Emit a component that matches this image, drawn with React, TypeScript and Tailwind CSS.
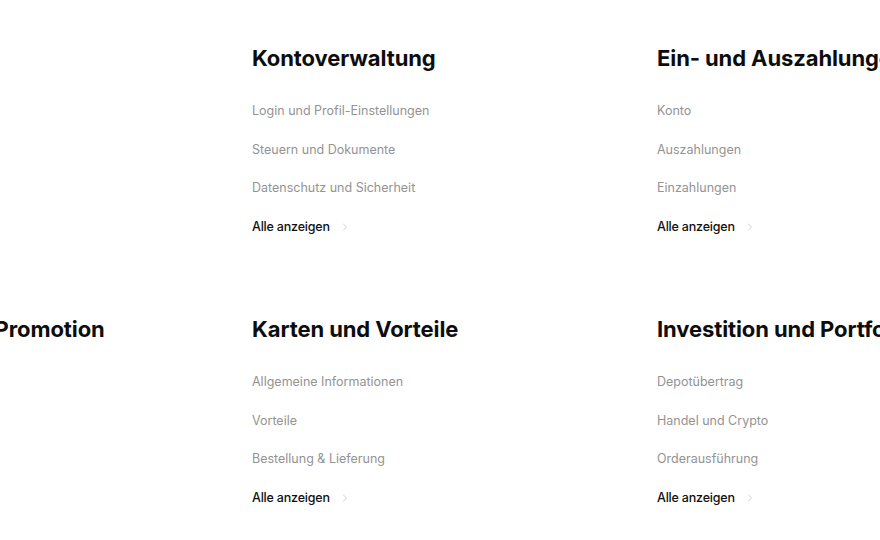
import { ChevronRight } from 'lucide-react'

interface Section {
  title: string
  links: string[]
}

const ROWS: Section[][] = [
  [
    { title: '', links: [] },
    {
      title: 'Kontoverwaltung',
      links: ['Login und Profil-Einstellungen', 'Steuern und Dokumente', 'Datenschutz und Sicherheit'],
    },
    {
      title: 'Ein- und Auszahlungen',
      links: ['Konto', 'Auszahlungen', 'Einzahlungen'],
    },
  ],
  [
    { title: 'Aktionen und Promotion', links: [] },
    {
      title: 'Karten und Vorteile',
      links: ['Allgemeine Informationen', 'Vorteile', 'Bestellung & Lieferung'],
    },
    {
      title: 'Investition und Portfolio',
      links: ['Depotübertrag', 'Handel und Crypto', 'Orderausführung'],
    },
  ],
]

export default function App() {
  return (
    <div className="w-[880px] h-[540px] overflow-hidden bg-white font-['Inter',sans-serif]">
      <div className="ml-[-153px] pt-[43px] flex flex-col gap-[79px]">
        {ROWS.map((row, i) => (
          <div key={i} className="grid grid-cols-[405px_405px_405px] h-[192px]">
            {row.map((s, j) => (
              <SectionBlock key={j} section={s} />
            ))}
          </div>
        ))}
      </div>
    </div>
  )
}

function SectionBlock({ section }: { section: Section }) {
  if (!section.title) return <div />
  return (
    <div className="flex flex-col whitespace-nowrap">
      <h2 className="text-[22px] leading-[30px] font-bold tracking-[-0.1px] text-[#0d0d0d]">
        {section.title}
      </h2>
      {section.links.length > 0 && (
        <>
          <ul className="mt-[29px] flex flex-col gap-[20.5px]">
            {section.links.map(l => (
              <li key={l} className="text-[12.5px] leading-[18px] text-[#939393]">
                {l}
              </li>
            ))}
          </ul>
          <a className="mt-[21px] flex items-center gap-[9px] text-[12.5px] leading-[18px] font-medium tracking-[-0.2px] text-[#111]">
            Alle anzeigen
            <ChevronRight size={12} strokeWidth={1.6} className="text-[#c4c4c4]" />
          </a>
        </>
      )}
    </div>
  )
}
